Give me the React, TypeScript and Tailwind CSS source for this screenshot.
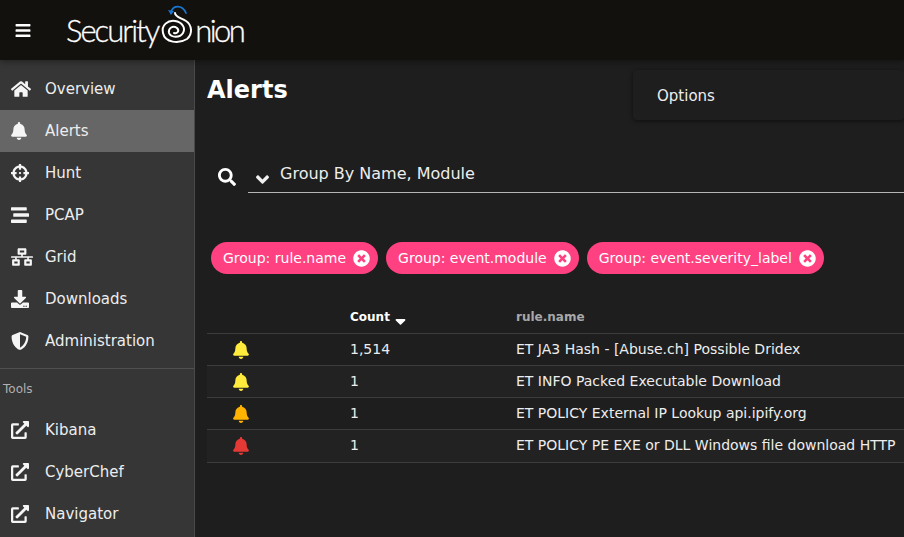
import type { IconType } from "react-icons";
import {
  FaAngleDown,
  FaBars,
  FaBell,
  FaCrosshairs,
  FaDownload,
  FaExternalLinkAlt,
  FaHome,
  FaNetworkWired,
  FaSearch,
  FaShieldAlt,
  FaSortDown,
  FaStream,
  FaTimesCircle,
} from "react-icons/fa";

type NavItem = { label: string; icon: IconType; iconWidth: string; active?: boolean };

const navItems: NavItem[] = [
  { label: "Overview", icon: FaHome, iconWidth: "w-[20px]" },
  { label: "Alerts", icon: FaBell, iconWidth: "w-[16px]", active: true },
  { label: "Hunt", icon: FaCrosshairs, iconWidth: "w-[18px]" },
  { label: "PCAP", icon: FaStream, iconWidth: "w-[18px]" },
  { label: "Grid", icon: FaNetworkWired, iconWidth: "w-[22px]" },
  { label: "Downloads", icon: FaDownload, iconWidth: "w-[18px]" },
  { label: "Administration", icon: FaShieldAlt, iconWidth: "w-[18px]" },
];

const tools = ["Kibana", "CyberChef", "Navigator"];

const chips = ["Group: rule.name", "Group: event.module", "Group: event.severity_label"];

const rows = [
  { count: "1,514", name: "ET JA3 Hash - [Abuse.ch] Possible Dridex", color: "text-[#ffeb3b]", bg: "bg-[#1e1e1e]" },
  { count: "1", name: "ET INFO Packed Executable Download", color: "text-[#ffeb3b]", bg: "bg-[#222222]" },
  { count: "1", name: "ET POLICY External IP Lookup api.ipify.org", color: "text-[#ffb300]", bg: "bg-[#1e1e1e]" },
  { count: "1", name: "ET POLICY PE EXE or DLL Windows file download HTTP", color: "text-[#e53935]", bg: "bg-[#222222]" },
];

const Logo = () => (
  <div className="ml-[35px] flex items-center text-[31px] leading-none tracking-[-2px] text-white [-webkit-text-stroke:0.3px_white] [font-family:'Lato',sans-serif]">
    <span className="font-light">Security</span>
    <svg className="ml-[2px] mt-[-13px] h-[42px] w-[33px]" viewBox="0 0 33 42" fill="none">
      <path d="M11 10 C12 2 22 1 26 10" stroke="#1976d2" strokeWidth="1.7" strokeLinecap="round" />
      <path d="M8 7 L14 8 L11 12 Z" fill="#1976d2" />
      <path
        d="M15 10 C15 14 21 15 26 18 C32 22 33 31 27 36 C19 41 5 40 3 30 C1 22 8 17 15 18 C22 19 26 25 23 30 C20 35 11 35 9 30 C8 25 13 22 17 25 C20 28 17 31 14 30"
        stroke="white"
        strokeWidth="2"
        strokeLinecap="round"
      />
    </svg>
    <span className="ml-[2px] font-light tracking-[-2.6px]">nion</span>
  </div>
);

export default function App() {
  return (
    <div className="flex h-[537px] w-[904px] flex-col overflow-hidden bg-[#1e1e1e] text-[14px] text-[#ededed] [font-family:'DejaVu_Sans',sans-serif]">
      <header className="relative z-10 flex h-[60px] shrink-0 items-center bg-[#12110e] pl-[15px] shadow-[0_2px_6px_rgba(0,0,0,0.35)]">
        <FaBars className="h-[17px] w-[16px] text-white" />
        <Logo />
      </header>

      <div className="flex min-h-0 flex-1">
        <aside className="w-[195px] shrink-0 border-r border-[#4a4a4a] bg-[#363636] pt-2 text-[15px]">
          {navItems.map((item) => (
            <div
              key={item.label}
              className={`flex h-[42px] items-center pl-[11px] ${item.active ? "bg-[#666666]" : ""}`}
            >
              <div className="w-[34px] shrink-0">
                <item.icon className={`h-[18px] ${item.iconWidth} text-[#f5f5f5]`} />
              </div>
              <span>{item.label}</span>
            </div>
          ))}
          <div className="mt-[6px] border-t border-[#505050] pt-[12px] pl-[3px] text-[12px] leading-[16px] text-[#b0b0b0]">
            Tools
          </div>
          <div className="mt-[12px]">
            {tools.map((tool) => (
              <div key={tool} className="flex h-[42px] items-center pl-[11px]">
                <div className="w-[34px] shrink-0">
                  <FaExternalLinkAlt className="h-[18px] w-[18px] text-[#f5f5f5]" />
                </div>
                <span>{tool}</span>
              </div>
            ))}
          </div>
        </aside>

        <main className="min-w-0 flex-1 pl-[12px]">
          <div className="flex items-start justify-between">
            <h1 className="mt-[14px] text-[24px] font-bold leading-[32px] text-white">Alerts</h1>
            <div className="mt-[10px] flex h-[50px] w-[271px] items-center rounded-[4px] bg-[#1e1e1e] pl-[24px] pt-[2px] text-[15px] shadow-[0_1px_4px_rgba(0,0,0,0.55)]">
              Options
            </div>
          </div>

          <div className="mt-[32px] flex items-start">
            <FaSearch className="ml-[11px] mt-[16px] h-[18px] w-[18px] text-white" />
            <div className="ml-[12px] flex h-[41px] flex-1 items-start border-b border-[#b5b5b5] pt-[10px]">
              <FaAngleDown className="ml-[8px] mt-[7px] h-[21px] w-[13px] text-[#f0f0f0]" />
              <span className="ml-[11px] text-[16px] leading-[24px]">Group By Name, Module</span>
            </div>
          </div>

          <div className="mt-[49px] flex gap-[8px] pl-[4px]">
            {chips.map((chip) => (
              <div
                key={chip}
                className="flex h-[32px] items-center rounded-full bg-[#ff4081] pl-[12px] pr-[8px] text-white"
              >
                {chip}
                <FaTimesCircle className="ml-[7px] h-[17px] w-[17px] text-white" />
              </div>
            ))}
          </div>

          <div className="mt-[27px] overflow-hidden">
            <div className="flex h-[33px] items-center border-b border-[#3c3c3c] text-[12px] font-bold">
              <div className="w-[143px]" />
              <div className="flex w-[166px] items-center text-white">
                Count
                <FaSortDown className="ml-[5px] mt-[2px] h-[18px] w-[11px]" />
              </div>
              <div className="text-[#a8a8a8]">rule.name</div>
            </div>
            {rows.map((row, i) => (
              <div
                key={row.name}
                className={`flex items-center border-b border-[#3c3c3c] whitespace-nowrap ${row.bg} ${i === rows.length - 1 ? "h-[33px] pb-[1px]" : "h-[32px]"}`}
              >
                <div className="w-[143px] pl-[25px]">
                  <FaBell className={`h-[18px] w-[18px] ${row.color}`} />
                </div>
                <div className="w-[166px]">{row.count}</div>
                <div>{row.name}</div>
              </div>
            ))}
          </div>
        </main>
      </div>
    </div>
  );
}
